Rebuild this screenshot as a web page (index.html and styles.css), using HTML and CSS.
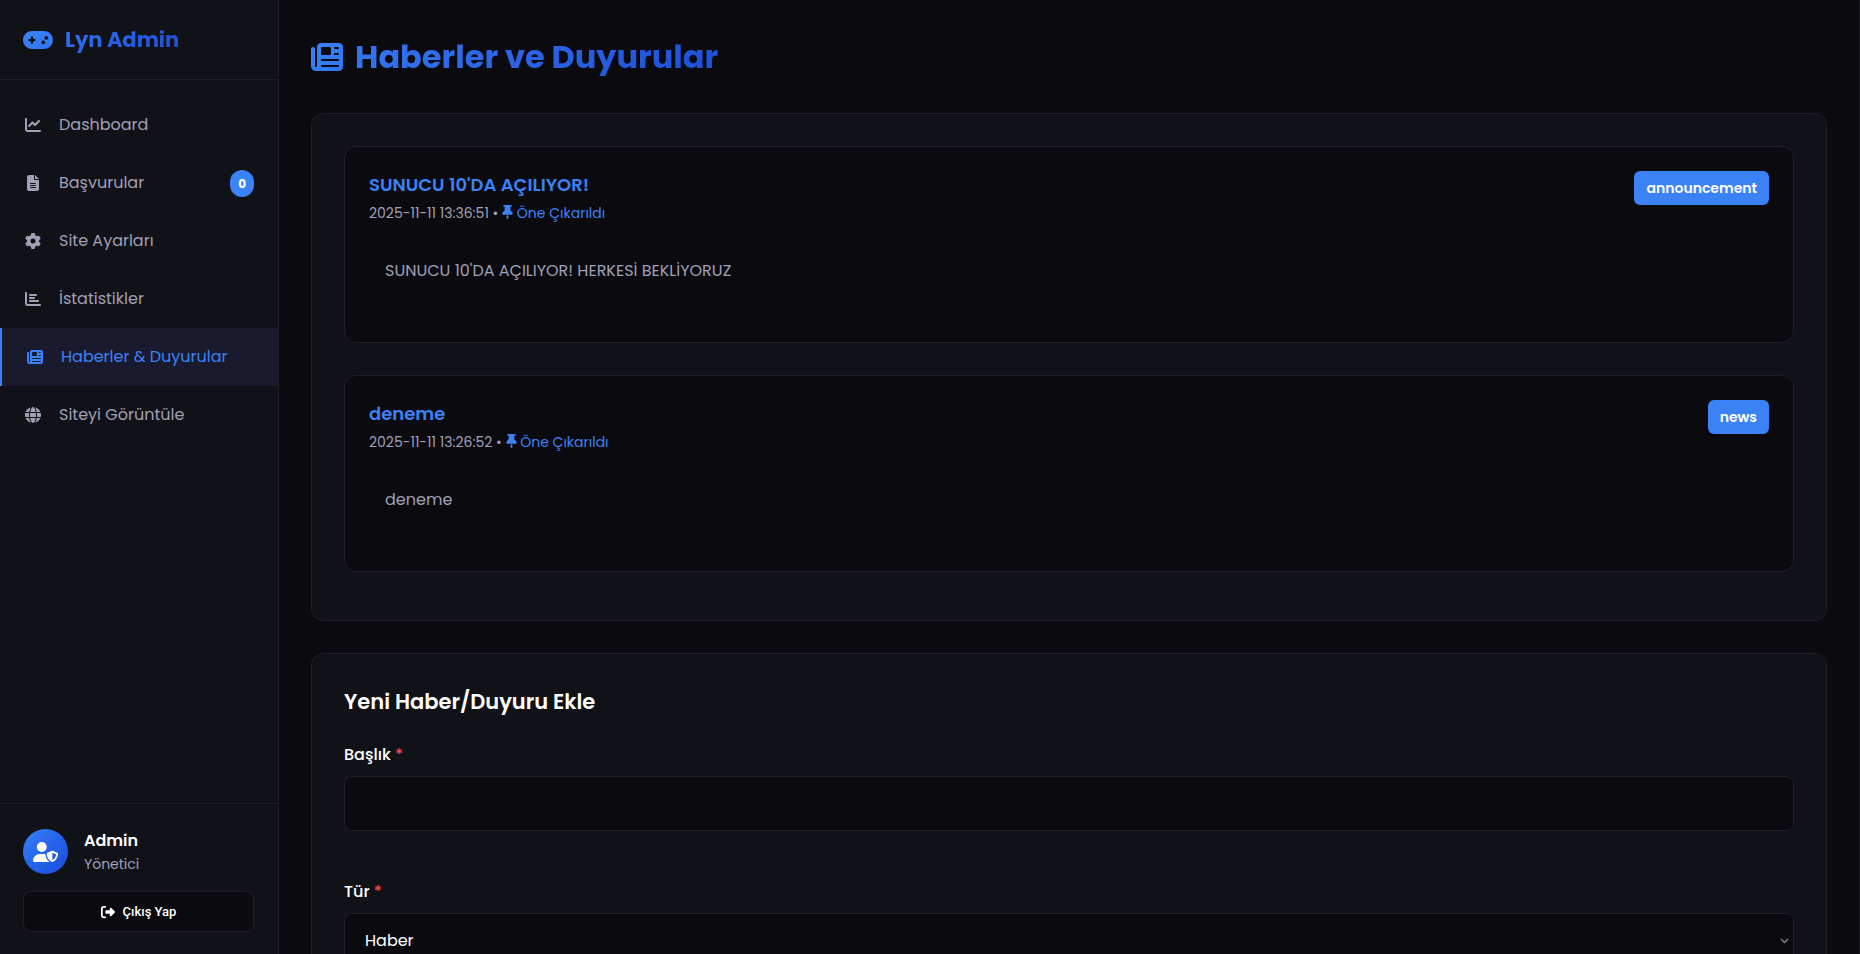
FILE: index.html
```html
<!DOCTYPE html>
<html lang="tr">
<head>
    <meta charset="UTF-8">
    <meta name="viewport" content="width=device-width, initial-scale=1.0">
    <title>Haberler ve Duyurular - Lyn Admin</title>
    <link rel="stylesheet" href="styles.css">
</head>
<body>

<!-- İkonlar -->
<svg class="sprite" aria-hidden="true">
    <defs>
        <linearGradient id="brand" x1="0" y1="0" x2="1" y2="1">
            <stop offset="0" stop-color="#3b82f6"/>
            <stop offset="1" stop-color="#3075f1"/>
        </linearGradient>
    </defs>
    <symbol id="i-gamepad" viewBox="0 0 640 512"><path d="M192 64C86 64 0 150 0 256S86 448 192 448H448c106 0 192-86 192-192s-86-192-192-192H192zM496 168a40 40 0 1 1 0 80 40 40 0 1 1 0-80zM392 304a40 40 0 1 1 80 0 40 40 0 1 1 -80 0zM168 200c0-13.3 10.7-24 24-24s24 10.7 24 24v32h32c13.3 0 24 10.7 24 24s-10.7 24-24 24H216v32c0 13.3-10.7 24-24 24s-24-10.7-24-24V280H136c-13.3 0-24-10.7-24-24s10.7-24 24-24h32V200z"/></symbol>
    <symbol id="i-line" viewBox="0 0 512 512"><path d="M64 64c0-17.7-14.3-32-32-32S0 46.3 0 64V400c0 44.2 35.8 80 80 80H480c17.7 0 32-14.3 32-32s-14.3-32-32-32H80c-8.8 0-16-7.2-16-16V64zm406.6 86.6c12.5-12.5 12.5-32.8 0-45.3s-32.8-12.5-45.3 0L320 210.7l-57.4-57.4c-12.5-12.5-32.8-12.5-45.3 0l-112 112c-12.5 12.5-12.5 32.8 0 45.3s32.8 12.5 45.3 0L240 221.3l57.4 57.4c12.5 12.5 32.8 12.5 45.3 0l128-128z"/></symbol>
    <symbol id="i-file" viewBox="0 0 384 512"><path d="M64 0C28.7 0 0 28.7 0 64V448c0 35.3 28.7 64 64 64H320c35.3 0 64-28.7 64-64V160H256c-17.7 0-32-14.3-32-32V0H64zM256 0V128H384L256 0zM112 256H272c8.8 0 16 7.2 16 16s-7.2 16-16 16H112c-8.8 0-16-7.2-16-16s7.2-16 16-16zm0 64H272c8.8 0 16 7.2 16 16s-7.2 16-16 16H112c-8.8 0-16-7.2-16-16s7.2-16 16-16zm0 64H272c8.8 0 16 7.2 16 16s-7.2 16-16 16H112c-8.8 0-16-7.2-16-16s7.2-16 16-16z"/></symbol>
    <symbol id="i-gear" viewBox="0 0 512 512"><path d="M495.9 166.6c3.2 8.7 .5 18.4-6.4 24.6l-43.3 39.4c1.1 8.3 1.7 16.8 1.7 25.4s-.6 17.1-1.7 25.4l43.3 39.4c6.9 6.2 9.6 15.9 6.4 24.6c-4.4 11.9-9.7 23.3-15.8 34.3l-4.7 8.1c-6.6 11-14 21.4-22.1 31.2c-5.9 7.2-15.7 9.6-24.5 6.8l-55.7-17.7c-13.4 10.3-28.2 18.9-44 25.4l-12.5 57.1c-2 9.1-9 16.3-18.2 17.8c-13.8 2.3-28 3.5-42.5 3.5s-28.7-1.2-42.5-3.5c-9.2-1.5-16.2-8.7-18.2-17.8l-12.5-57.1c-15.8-6.5-30.6-15.1-44-25.4L83.1 425.9c-8.8 2.8-18.6 .3-24.5-6.8c-8.1-9.8-15.5-20.2-22.1-31.2l-4.7-8.1c-6.1-11-11.4-22.4-15.8-34.3c-3.2-8.7-.5-18.4 6.4-24.6l43.3-39.4C64.6 273.1 64 264.6 64 256s.6-17.1 1.7-25.4L22.4 191.2c-6.9-6.2-9.6-15.9-6.4-24.6c4.4-11.9 9.7-23.3 15.8-34.3l4.7-8.1c6.6-11 14-21.4 22.1-31.2c5.9-7.2 15.7-9.6 24.5-6.8l55.7 17.7c13.4-10.3 28.2-18.9 44-25.4l12.5-57.1c2-9.1 9-16.3 18.2-17.8C227.3 1.2 241.5 0 256 0s28.7 1.2 42.5 3.5c9.2 1.5 16.2 8.7 18.2 17.8l12.5 57.1c15.8 6.5 30.6 15.1 44 25.4l55.7-17.7c8.8-2.8 18.6-.3 24.5 6.8c8.1 9.8 15.5 20.2 22.1 31.2l4.7 8.1c6.1 11 11.4 22.4 15.8 34.3zM256 336a80 80 0 1 0 0-160 80 80 0 1 0 0 160z"/></symbol>
    <symbol id="i-bar" viewBox="0 0 512 512"><path d="M32 32c17.7 0 32 14.3 32 32V400c0 8.8 7.2 16 16 16H480c17.7 0 32 14.3 32 32s-14.3 32-32 32H80c-44.2 0-80-35.8-80-80V64C0 46.3 14.3 32 32 32zm96 96c0-17.7 14.3-32 32-32l192 0c17.7 0 32 14.3 32 32s-14.3 32-32 32H160c-17.7 0-32-14.3-32-32zm32 64H288c17.7 0 32 14.3 32 32s-14.3 32-32 32H160c-17.7 0-32-14.3-32-32s14.3-32 32-32zm0 96H416c17.7 0 32 14.3 32 32s-14.3 32-32 32H160c-17.7 0-32-14.3-32-32s14.3-32 32-32z"/></symbol>
    <symbol id="i-news" viewBox="0 0 512 512"><path d="M96 96c0-35.3 28.7-64 64-64H448c35.3 0 64 28.7 64 64V416c0 35.3-28.7 64-64 64H80c-44.2 0-80-35.8-80-80V128c0-17.7 14.3-32 32-32s32 14.3 32 32V400c0 8.8 7.2 16 16 16s16-7.2 16-16V96zm64 24v80c0 13.3 10.7 24 24 24H296c13.3 0 24-10.7 24-24V120c0-13.3-10.7-24-24-24H184c-13.3 0-24 10.7-24 24zm208-8c0 8.8 7.2 16 16 16h48c8.8 0 16-7.2 16-16s-7.2-16-16-16H384c-8.8 0-16 7.2-16 16zm0 96c0 8.8 7.2 16 16 16h48c8.8 0 16-7.2 16-16s-7.2-16-16-16H384c-8.8 0-16 7.2-16 16zM160 304c0 8.8 7.2 16 16 16H432c8.8 0 16-7.2 16-16s-7.2-16-16-16H176c-8.8 0-16 7.2-16 16zm0 96c0 8.8 7.2 16 16 16H432c8.8 0 16-7.2 16-16s-7.2-16-16-16H176c-8.8 0-16 7.2-16 16z"/></symbol>
    <symbol id="i-globe" viewBox="0 0 512 512"><path d="M352 256c0 22.2-1.2 43.6-3.3 64H163.3c-2.2-20.4-3.3-41.8-3.3-64s1.2-43.6 3.3-64H348.7c2.2 20.4 3.3 41.8 3.3 64zm28.8-64H503.9c5.3 20.5 8.1 41.9 8.1 64s-2.8 43.5-8.1 64H380.8c2.1-20.6 3.2-42 3.2-64s-1.1-43.4-3.2-64zm112.6-32H376.7c-10-63.9-29.8-117.4-55.3-151.6c78.3 20.7 142 77.5 171.9 151.6zm-149.1 0H167.7c6.1-36.4 15.5-68.6 27-94.7c10.5-23.6 22.2-40.7 33.5-51.5C239.4 3.2 248.7 0 256 0s16.6 3.2 27.8 13.8c11.3 10.8 23 27.9 33.5 51.5c11.6 26 20.9 58.2 27 94.7zm-209 0H18.6C48.6 85.9 112.2 29.1 190.6 8.4C165.1 42.6 145.3 96.1 135.3 160zM8.1 192H131.2c-2.1 20.6-3.2 42-3.2 64s1.1 43.4 3.2 64H8.1C2.8 299.5 0 278.1 0 256s2.8-43.5 8.1-64zM194.7 446.6c-11.6-26-20.9-58.2-27-94.6H344.3c-6.1 36.4-15.5 68.6-27 94.6c-10.5 23.6-22.2 40.7-33.5 51.5C272.6 508.8 263.3 512 256 512s-16.6-3.2-27.8-13.8c-11.3-10.8-23-27.9-33.5-51.5zM135.3 352c10 63.9 29.8 117.4 55.3 151.6C112.2 482.9 48.6 426.1 18.6 352H135.3zm358.1 0c-30 74.1-93.6 130.9-171.9 151.6c25.5-34.2 45.2-87.7 55.3-151.6H493.4z"/></symbol>
    <symbol id="i-exit" viewBox="0 0 512 512"><path d="M377.9 105.9L500.7 228.7c7.2 7.2 11.3 17.1 11.3 27.3s-4.1 20.1-11.3 27.3L377.9 406.1c-6.4 6.4-15 9.9-24 9.9c-18.7 0-33.9-15.2-33.9-33.9l0-62.1-128 0c-17.7 0-32-14.3-32-32l0-64c0-17.7 14.3-32 32-32l128 0 0-62.1c0-18.7 15.2-33.9 33.9-33.9c9 0 17.6 3.6 24 9.9zM160 96L96 96c-17.7 0-32 14.3-32 32l0 256c0 17.7 14.3 32 32 32l64 0c17.7 0 32 14.3 32 32s-14.3 32-32 32l-64 0c-53 0-96-43-96-96L0 128C0 75 43 32 96 32l64 0c17.7 0 32 14.3 32 32s-14.3 32-32 32z"/></symbol>
    <symbol id="i-pin" viewBox="0 0 384 512"><path d="M32 32C32 14.3 46.3 0 64 0H320c17.7 0 32 14.3 32 32s-14.3 32-32 32H290.5l11.4 148.2c36.7 19.9 65.7 53.2 79.5 94.7l1 3c3.3 9.8 1.6 20.5-4.4 28.8s-15.7 13.3-26 13.3H32c-10.3 0-19.9-4.9-26-13.3s-7.7-19.1-4.4-28.8l1-3c13.8-41.5 42.8-74.8 79.5-94.7L93.5 64H64C46.3 64 32 49.7 32 32zM160 384h64v96c0 17.7-14.3 32-32 32s-32-14.3-32-32V384z"/></symbol>
    <symbol id="i-shield" viewBox="0 0 640 512"><path d="M224 256A128 128 0 1 0 224 0a128 128 0 1 0 0 256zm-45.7 48C79.8 304 0 383.8 0 482.3C0 498.7 13.3 512 29.7 512H418.3c1.8 0 3.5-.2 5.3-.5c-76.3-55.1-99.8-141-103.1-200.2c-16.1-4.8-33.1-7.3-50.7-7.3H178.3zm308.8-78.3l-120 48C358 277.4 352 286.2 352 296c0 63.3 25.9 168.8 134.8 214.2c5.9 2.5 12.6 2.5 18.5 0C614.1 464.8 640 359.3 640 296c0-9.8-6-18.6-15.1-22.3l-120-48c-5.7-2.3-12.1-2.3-17.8 0zM591.4 312c-3.9 50.7-27.2 116.7-95.4 149.7V273.8L591.4 312z"/></symbol>
</svg>

<div class="layout">
    <!-- Sidebar -->
    <aside class="sidebar">
        <div class="sidebar-header">
            <svg class="logo-icon"><use href="#i-gamepad"/></svg>
            <h2 class="logo-text">Lyn Admin</h2>
        </div>

        <nav class="sidebar-nav">
            <a href="#" class="nav-item"><svg class="nav-icon"><use href="#i-line"/></svg><span>Dashboard</span></a>
            <a href="#" class="nav-item"><svg class="nav-icon"><use href="#i-file"/></svg><span>Başvurular</span><span class="badge">0</span></a>
            <a href="#" class="nav-item"><svg class="nav-icon"><use href="#i-gear"/></svg><span>Site Ayarları</span></a>
            <a href="#" class="nav-item"><svg class="nav-icon"><use href="#i-bar"/></svg><span>İstatistikler</span></a>
            <a href="#" class="nav-item active"><svg class="nav-icon"><use href="#i-news"/></svg><span>Haberler &amp; Duyurular</span></a>
            <a href="#" class="nav-item"><svg class="nav-icon"><use href="#i-globe"/></svg><span>Siteyi Görüntüle</span></a>
        </nav>

        <div class="sidebar-footer">
            <div class="user-info">
                <div class="user-avatar"><svg class="avatar-icon"><use href="#i-shield"/></svg></div>
                <div>
                    <div class="user-name">Admin</div>
                    <div class="user-role">Yönetici</div>
                </div>
            </div>
            <button type="button" class="logout-btn"><svg class="logout-icon"><use href="#i-exit"/></svg>Çıkış Yap</button>
        </div>
    </aside>

    <!-- Main Content -->
    <main class="main-content">
        <header class="page-header">
            <svg class="title-icon"><use href="#i-news"/></svg>
            <h1 class="page-title">Haberler ve Duyurular</h1>
        </header>

        <section class="card">
            <article class="news-item">
                <div class="news-head">
                    <div>
                        <h3 class="news-title">SUNUCU 10'DA AÇILIYOR!</h3>
                        <div class="news-meta">2025-11-11 13:36:51 • <span class="featured"><svg class="pin-icon"><use href="#i-pin"/></svg> Öne Çıkarıldı</span></div>
                    </div>
                    <span class="news-type">announcement</span>
                </div>
                <p class="news-content">SUNUCU 10'DA AÇILIYOR! HERKESİ BEKLİYORUZ</p>
            </article>

            <article class="news-item">
                <div class="news-head">
                    <div>
                        <h3 class="news-title">deneme</h3>
                        <div class="news-meta">2025-11-11 13:26:52 • <span class="featured"><svg class="pin-icon"><use href="#i-pin"/></svg> Öne Çıkarıldı</span></div>
                    </div>
                    <span class="news-type">news</span>
                </div>
                <p class="news-content">deneme</p>
            </article>
        </section>

        <!-- Yeni haber formu -->
        <section class="card">
            <h2 class="form-title">Yeni Haber/Duyuru Ekle</h2>
            <form>
                <div class="form-group">
                    <label for="title">Başlık <span class="required">*</span></label>
                    <input type="text" id="title" name="title" required>
                </div>
                <div class="form-group">
                    <label for="type">Tür <span class="required">*</span></label>
                    <select id="type" name="type" required>
                        <option value="news">Haber</option>
                        <option value="announcement">Duyuru</option>
                    </select>
                </div>
            </form>
        </section>
    </main>
</div>

</body>
</html>
```
FILE: styles.css
```css
:root {
    --primary: #3b82f6;
    --bg: #0a0a0f;
    --card: #111217;
    --border: #1e1e2d;
    --text: #ffffff;
    --muted: #a0a0b8;
}

* {
    margin: 0;
    padding: 0;
    box-sizing: border-box;
}

body {
    font-family: Poppins, Inter, "Open Sans", sans-serif;
    font-size: 16px;
    line-height: 26px;
    background: var(--bg);
    color: var(--text);
    height: 100vh;
    overflow: hidden;
}

svg {
    fill: currentColor;
    flex-shrink: 0;
}

.sprite {
    display: block;
    width: 0;
    height: 0;
}

.layout {
    display: flex;
    height: 100vh;
}

/* Sidebar */
.sidebar {
    width: 279px;
    flex-shrink: 0;
    display: flex;
    flex-direction: column;
    background: var(--card);
    border-right: 1px solid var(--border);
}

.sidebar-header {
    display: flex;
    align-items: center;
    gap: 12px;
    height: 80px;
    padding: 0 24px 0 23px;
    border-bottom: 1px solid var(--border);
}

.logo-icon {
    width: 30px;
    height: 24px;
    fill: url(#brand);
}

.logo-text {
    font-size: 21px;
    font-weight: 700;
    background: linear-gradient(135deg, #2f72f0, #1d4ed8);
    -webkit-background-clip: text;
    background-clip: text;
    color: transparent;
}

.sidebar-nav {
    flex: 1;
    padding: 16px 0;
}

.nav-item {
    display: flex;
    align-items: center;
    gap: 16px;
    height: 58px;
    padding: 0 24px 0 23px;
    color: var(--muted);
    text-decoration: none;
}

.nav-item.active {
    background: #1a1a2e;
    color: var(--primary);
    border-left: 2px solid var(--primary);
}

.nav-icon {
    width: 20px;
    height: 16px;
}

.badge {
    margin-left: auto;
    padding: 2px 8px;
    border-radius: 12px;
    background: var(--primary);
    color: var(--text);
    font-size: 12px;
    font-weight: 700;
    line-height: 23px;
}

.sidebar-footer {
    padding: 24px 24px 22px 23px;
    border-top: 1px solid var(--border);
}

.user-info {
    display: flex;
    align-items: center;
    gap: 16px;
    margin-bottom: 16px;
}

.user-avatar {
    display: flex;
    align-items: center;
    justify-content: center;
    width: 45px;
    height: 45px;
    border-radius: 50%;
    background: linear-gradient(135deg, #3b82f6, #2563eb, #1d4ed8);
}

.avatar-icon {
    width: 25px;
    height: 20px;
}

.user-name {
    font-weight: 600;
}

.user-role {
    color: var(--muted);
    font-size: 14px;
    line-height: 21px;
}

.logout-btn {
    display: flex;
    align-items: center;
    justify-content: center;
    gap: 8px;
    width: 100%;
    height: 41px;
    border: 1px solid var(--border);
    border-radius: 8px;
    background: var(--bg);
    color: var(--text);
    font-family: Roboto, "Liberation Sans", sans-serif;
    font-size: 13px;
    font-weight: 500;
    cursor: pointer;
}

.logout-icon {
    width: 14px;
    height: 14px;
}

/* Main */
.main-content {
    flex: 1;
    padding: 32px;
    overflow: hidden;
    border-right: 1px solid var(--border);
}

.page-header {
    display: flex;
    align-items: center;
    gap: 12px;
    height: 49px;
    margin-bottom: 32px;
}

.title-icon {
    width: 32px;
    height: 32px;
    fill: url(#brand);
}

.page-title {
    font-size: 32px;
    font-weight: 700;
    line-height: 48px;
    background: linear-gradient(135deg, #3477f2, #1d4ed8);
    -webkit-background-clip: text;
    background-clip: text;
    color: transparent;
}

.card {
    margin-bottom: 32px;
    padding: 32px;
    background: var(--card);
    border: 1px solid var(--border);
    border-radius: 12px;
}

.news-item {
    min-height: 197px;
    padding: 24px;
    margin-bottom: 32px;
    background: var(--bg);
    border: 1px solid var(--border);
    border-radius: 12px;
}

.news-item:last-child {
    margin-bottom: 16px;
}

.news-head {
    display: flex;
    justify-content: space-between;
    align-items: flex-start;
    margin-bottom: 16px;
}

.news-title {
    color: var(--primary);
    font-size: 18px;
    font-weight: 600;
    line-height: 28px;
    margin-bottom: 3px;
}

.news-meta {
    color: var(--muted);
    font-size: 14px;
    line-height: 22px;
}

.featured {
    color: var(--primary);
}

.pin-icon {
    width: 11px;
    height: 14px;
    vertical-align: -1px;
}

.news-type {
    padding: 6px 12px;
    border-radius: 6px;
    background: var(--primary);
    font-size: 14px;
    font-weight: 600;
    line-height: 22px;
}

.news-content {
    padding: 16px;
    color: var(--muted);
    line-height: 29px;
}

/* Form */
.form-title {
    font-size: 21px;
    font-weight: 600;
    line-height: 32px;
    margin-bottom: 24px;
}

.form-group {
    margin-bottom: 48px;
}

label {
    display: block;
    font-weight: 500;
    margin-bottom: 8px;
}

.required {
    color: #ef4444;
}

input,
select {
    display: block;
    width: 100%;
    height: 55px;
    padding: 0 20px;
    border: 1px solid var(--border);
    border-radius: 8px;
    background: var(--bg);
    color: var(--text);
    font-family: inherit;
    font-size: 16px;
}

select {
    appearance: none;
    background: var(--bg) url("data:image/svg+xml,%3Csvg xmlns='http://www.w3.org/2000/svg' width='9' height='6'%3E%3Cpath d='M1 1l3.5 3.5L8 1' fill='none' stroke='%23808080' stroke-width='1.5'/%3E%3C/svg%3E") no-repeat right 4px center;
}
```
